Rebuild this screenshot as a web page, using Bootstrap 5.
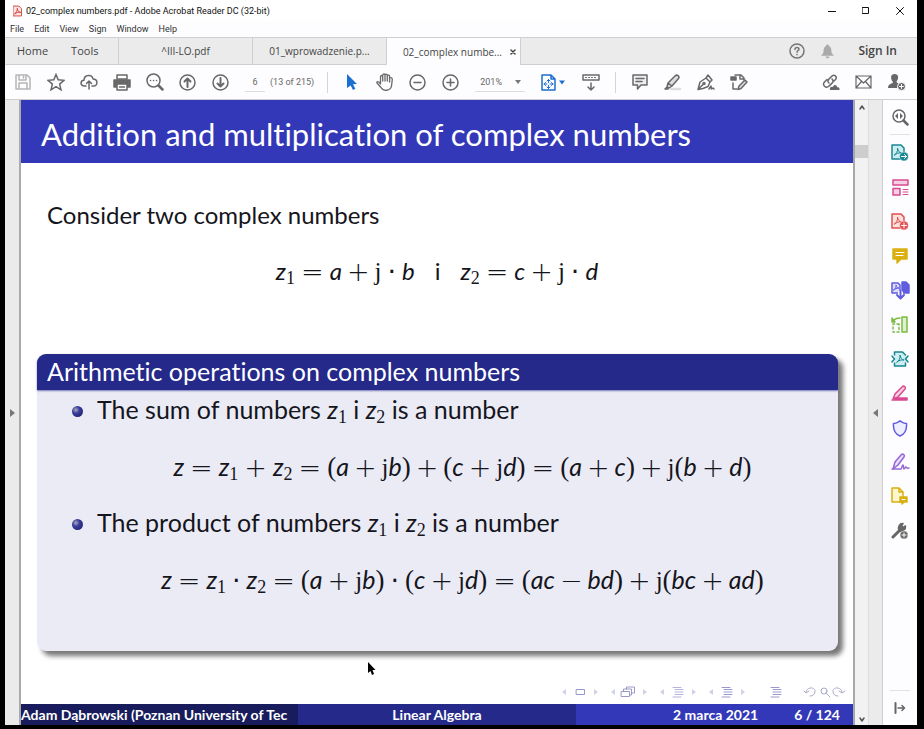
<!DOCTYPE html>
<html lang="en">
<head>
<meta charset="utf-8">
<meta name="viewport" content="width=device-width, initial-scale=1">
<title>02_complex numbers.pdf - Adobe Acrobat Reader DC (32-bit)</title>
<link href="https://cdn.jsdelivr.net/npm/bootstrap@5.3.0/dist/css/bootstrap.min.css" rel="stylesheet">
<style>
:root{--line:#cfcfcf;--blue:#3338b8;--navy:#24298a;--deep:#181c5c}
body{background:#000;font-family:"Open Sans","Noto Sans",sans-serif;font-size:9px;line-height:14px;color:#333;padding:0 7px 4px 5px}
button,input,select{font:inherit;color:inherit;border:0;background:none;padding:0}
a{color:inherit;text-decoration:none}
svg{display:block;fill:none;stroke:currentColor;stroke-width:1.5;stroke-linejoin:round;stroke-linecap:round}
svg.thin{stroke-width:1}
svg.solid{stroke:none}
.app{background:#fdfcfe}
.titlebar{height:21px;background:#fff;color:#111;font-family:Roboto,"Open Sans",sans-serif}
.winbtn{width:34px;height:20px;display:grid;place-items:center}
.menus{height:16px;padding-left:5px;gap:10px;font-family:Roboto,"Open Sans",sans-serif}
.tabs{height:28px;background:#ebebeb;border-top:1px solid var(--line);border-bottom:1px solid var(--line);font-size:11px;color:#444}
.fixedtabs{width:113px;padding-left:12px;gap:23px}
.doc{width:134px;border-left:1px solid var(--line);font-size:10px}
.doc.open{background:#fdfcfe;margin-bottom:-1px;border-right:1px solid var(--line);width:135px}
.signin{font-size:12px;font-weight:600}
.tools{height:35px;border-bottom:1px solid var(--line);color:#686868;padding-left:1px;font-family:Roboto,"Open Sans",sans-serif}
.tool{width:33px;height:32px;display:grid;place-items:center;flex:none}
.rule{width:1px;height:21px;background:#d5d5d5;margin:0 7px 0 13px}
.rule.near{margin-left:8px}
.pageno{width:20px;height:20px;border-bottom:1px solid #ddd;text-align:center;margin:0 5px 0 8px}
.zoomsel{width:50px;height:20px;border-bottom:1px solid #ddd;appearance:none;padding-left:5px}
.fit{margin-left:12px}
.rail{width:16px;background:#ebebeb;border-right:2px solid #aaa;flex:none}
.arrow{color:#777}
.sheet{background:#fff;border-right:2px solid #a8a8a8;font-family:Lato,"Open Sans",sans-serif;font-variant-ligatures:none;font-size:24px;line-height:30px;color:#15151c;min-width:0}
.sheet h1{background:var(--blue);color:#fff;font-size:31px;line-height:36px;font-weight:400;padding:16px 20px 11px;margin:0}
.intro{padding:37px 26px 26px;margin:0}
.eq{text-align:center;margin:0;white-space:nowrap}
.eq b{font:200 27px/0 "DejaVu Sans",sans-serif;padding:0 6px;vertical-align:-1px}
.eq b.tight{padding:0 5px}
.eq b.dot{font-weight:400;padding:0 6px}
.eq u{text-decoration:none;font:27px/0 "Liberation Serif",serif}
.eq .j{font-size:25px}
.sheet sub{font:18px/0 "Liberation Serif",serif;bottom:-4px}
.block{margin:68px 15px 0 16px;border-radius:9px;background:#ebebf6;box-shadow:5px 5px 5px #777}
.block h2{background:var(--navy);color:#fff;font-size:25px;line-height:34px;font-weight:400;padding:0 10px 2px;margin:0;border-radius:9px 9px 0 0;box-shadow:0 1px 2px #7779b8}
.block ul{list-style:none;margin:0;padding:4px 10px 57px 60px;font-size:25px}
.block li{position:relative}
.block li::before{content:"";position:absolute;left:-25px;top:12px;width:11px;height:11px;border-radius:50%;background:radial-gradient(circle at 35% 35%,#aab 0,#3a3e9c 35%,#15185c 100%)}
.block li .eq{margin:27px 0 26px}
.block li:last-child .eq{margin-bottom:0}
.beam{padding:0 6px 5px 0}
.foot{font-size:14px;line-height:21px;color:#fff;font-weight:700;white-space:nowrap}
.foot>div{flex:1 1 0;min-width:0}
.author{background:var(--deep)}.subject{background:var(--navy)}.when{background:var(--blue)}
.when span{margin-left:36px}
.when span:last-child{margin-right:13px}
.scroll{width:13px;background:#f2f2f2;flex:none;color:#555}
.thumb{height:13px;background:#cdcdcd;margin-top:31px}
.gutter{width:15px;background:#ebebeb;border-left:1px solid #ddd;border-right:1px solid var(--line);flex:none}
.side{width:34px;flex:none;color:#666}
.side button{width:34px;height:34px;display:grid;place-items:center}
.side .grp{padding-top:1px}
.side hr{width:20px;margin:0 auto;border-color:#999}
.teal{color:#168792}.pink{color:#d84a91}.red{color:#e0504f}.gold{color:#d9b010}.indigo{color:#605ce0}.green{color:#7cbb45}.violet{color:#9568d8}
.faint{color:#b5b5b5}.grey{color:#777}.azure{color:#1b6fd0}.pdfred{color:#d33a35}
.pointer{position:absolute;left:367px;top:661px}
</style>
<script src="https://cdn.jsdelivr.net/npm/bootstrap@5.3.0/dist/js/bootstrap.bundle.min.js"></script>
</head>
<body class="vh-100 overflow-hidden">
<div class="app h-100 d-flex flex-column">
<header>
<div class="titlebar d-flex align-items-center">
<svg class="thin pdfred ms-2 me-1" width="9" height="12" viewBox="0 0 10 12"><path fill="#fbe5e3" d="M.5.5h6l3 3v8h-9z"/><path d="M2 9c2-1 3-4 2.700-6C5 6 7 7.500 8.500 7.500 6 7 4 8 2 9z"/></svg>
<span>02_complex numbers.pdf - Adobe Acrobat Reader DC (32-bit)</span>
<div class="ms-auto d-flex">
<button class="winbtn" aria-label="Minimize"><svg class="thin" width="8" height="8"><path d="M.5 4.500h7"/></svg></button>
<button class="winbtn" aria-label="Maximize"><svg class="thin" width="8" height="8"><path d="M.5.5h6v6h-6z"/></svg></button>
<button class="winbtn" aria-label="Close"><svg class="thin" width="8" height="8"><path d="M.5.5l7 7m0-7l-7 7"/></svg></button>
</div></div>
<nav class="menus d-flex align-items-center" aria-label="Menu"><a href="#">File</a><a href="#">Edit</a><a href="#">View</a><a href="#">Sign</a><a href="#">Window</a><a href="#">Help</a></nav>
<nav class="tabs d-flex align-items-stretch" aria-label="Documents">
<div class="fixedtabs d-flex align-items-center"><a href="#">Home</a><a href="#">Tools</a></div>
<a href="#" class="doc d-flex align-items-center justify-content-center">^III-LO.pdf</a>
<a href="#" class="doc d-flex align-items-center justify-content-center">01_wprowadzenie.p...</a>
<div class="doc open d-flex align-items-center justify-content-end"><a href="#">02_complex numbe...</a><button class="ms-2 me-1" aria-label="Close tab"><svg width="6" height="6"><path d="M1 1l4 4m0-4l-4 4"/></svg></button></div>
<div class="ms-auto d-flex align-items-center gap-3 pe-3">
<button class="grey" aria-label="Help"><svg width="16" height="16"><circle cx="8" cy="8" r="7"/><path d="M6 6.500c0-3 4-2.500 4-.3C10 7.500 8 7.500 8 9.300M8 11.500v.2"/></svg></button>
<button aria-label="Notifications"><svg class="solid" width="13" height="15" viewBox="0 0 14 15"><path fill="#aaa" d="M7 0c1 0 1.500.7 1.500 1.500 3 1 2.500 5 3 7.500L14 12H0l2.500-3c.5-2.500 0-6.500 3-7.500C5.500.7 6 0 7 0zM5 13h4c0 2.500-4 2.500-4 0z"/></svg></button>
<a href="#" class="signin ms-2 me-1">Sign In</a></div>
</nav>
<div class="tools d-flex align-items-center">
<button class="tool faint" aria-label="Save"><svg width="16" height="16"><path d="M1 1h11l3 3v11H1zM4 1v5h7V1M4 15V9h8v6M8.500 2.500v1.500"/></svg></button>
<button class="tool" aria-label="Star"><svg width="18" height="18" viewBox="0 0 18 18"><path stroke-linejoin="miter" d="M9 1.500l2.200 5.300 5.800.5-4.400 3.800L14 16.800 9 13.700 4 16.800l1.400-5.700L1 7.300l5.800-.5z"/></svg></button>
<button class="tool" aria-label="Upload"><svg width="18" height="16"><path d="M6 12H4.500C0 12 0 6.500 4 6.300 4 0 12.500 0 13 5c5 0 5.300 7 .5 7H12M9 15V7M6.500 9.500L9 7l2.500 2.500"/></svg></button>
<button class="tool" aria-label="Print"><svg width="18" height="17"><path fill="currentColor" d="M1 6h16v7H1z"/><path fill="#fff" d="M4 1h10v4H4zM4 10h10v6H4z"/><path d="M6.500 13h5"/></svg></button>
<button class="tool" aria-label="Search"><svg width="18" height="18"><circle cx="7.500" cy="7.500" r="6.500"/><path d="M12.500 12.500l4 4" stroke-width="2.500"/><path d="M4.500 7.500h.1M7.500 7.500h.1M10.500 7.500h.1"/></svg></button>
<button class="tool" aria-label="Previous page"><svg width="17" height="17"><circle cx="8.500" cy="8.500" r="7.500"/><path d="M8.500 13V4.500M5.500 7.500l3-3 3 3" stroke-width="2"/></svg></button>
<button class="tool" aria-label="Next page"><svg width="17" height="17"><circle cx="8.500" cy="8.500" r="7.500"/><path d="M8.500 4v8.500M5.500 9.500l3 3 3-3" stroke-width="2"/></svg></button>
<input class="pageno" value="6" aria-label="Page number"><span>(13 of 215)</span>
<span class="rule"></span>
<button class="tool azure" aria-label="Select"><svg class="solid" width="10" height="16"><path fill="currentColor" d="M0 0l10 10-4 .3 2.300 4.500-2.300 1.200-2.300-4.600L0 14z"/></svg></button>
<button class="tool" aria-label="Hand"><svg width="18" height="18" viewBox="0 0 18 18"><path stroke-width="1.300" d="M4.500 11V4c0-2 2.200-2 2.200 0v4V2.500c0-2 2.300-2 2.300 0V8 2.500c0-1.800 2.300-1.800 2.300 0V8 3.500c0-1.800 2.300-1.800 2.300 0V9 6c0-2 2.700-2 2.700.5L15.500 13C14.500 18.300 7 18.500 5 14.500L1 10c-.5-1.800 1.500-2 3.500 1z"/></svg></button>
<button class="tool" aria-label="Zoom out"><svg width="17" height="17"><circle cx="8.500" cy="8.500" r="7.500"/><path d="M5 8.500h7"/></svg></button>
<button class="tool" aria-label="Zoom in"><svg width="17" height="17"><circle cx="8.500" cy="8.500" r="7.500"/><path d="M5 8.500h7M8.500 5v7"/></svg></button>
<div class="position-relative ms-2"><select class="zoomsel" aria-label="Zoom"><option>201%</option></select><svg class="solid position-absolute end-0 top-50 translate-middle-y me-1" width="6" height="4"><path fill="#777" d="M0 0h6L3 4z"/></svg></div>
<button class="tool fit azure" aria-label="Fit page"><svg width="25" height="17"><path d="M1 1h9l4 4v11H1zM10 1v4h4"/><path stroke-width="1" d="M7.500 5.500v3m0 3v3M3 10h3m3 0h3M6 7l1.500-1.500L9 7M6 13l1.500 1.500L9 13M4.500 8.500L3 10l1.500 1.500M10.500 8.500L12 10l-1.500 1.500"/><path fill="currentColor" stroke="none" d="M18 6.500h6l-3 4z"/></svg></button>
<button class="tool ms-1" aria-label="Scroll mode"><svg width="18" height="17"><path d="M1 1h16v5H1zM9 9v7M6 13l3 3 3-3"/><path stroke-dasharray="1 2" stroke-width="1" d="M3.500 3.500h12"/></svg></button>
<span class="rule near"></span>
<button class="tool" aria-label="Comment"><svg width="16" height="16"><path fill="#eee" d="M1 1h14v10H9l-3.500 4v-4H1zM4 4.500h8M4 7.500h6"/></svg></button>
<button class="tool" aria-label="Highlight"><svg width="17" height="17"><path stroke="#ddd" stroke-width="2.500" d="M7 15h9"/><path fill="#ddd" d="M4 9l7-7c2-2 5 0 3.500 2.500L8 12zM4 9l-1 4 2 1 3-2M3 13l-2 2h3"/></svg></button>
<button class="tool" aria-label="Sign"><svg width="18" height="17"><path d="M1 15.500L3 8l6-4 4 4-2 4.500-5 2zM1 15.500l5-5M9 4l2-3 4 5-2 2M12 15l2-3 .5 3 1.500-1 1 1"/><circle cx="7" cy="9.500" r="1"/></svg></button>
<button class="tool" aria-label="Stamp"><svg width="18" height="17"><path d="M5 1h6l3 3v2M10 1v4h3M3 9v6h4"/><path fill="currentColor" d="M1 3h5v3H1z"/><path fill="#ddd" d="M9 12l6-6 2 2-6 6.500-3 1z"/></svg></button>
<div class="ms-auto d-flex pe-1">
<button class="tool" aria-label="Share link"><svg width="18" height="17"><path d="M7 9c-3-2 1-5 2.500-6.500C12-.5 16 3 13.500 5.500L12 7M10 5c3 3-1 5-3 7-3 3-7.500-1-4.500-4L5 5.500"/><path fill="currentColor" stroke="none" d="M8 16c-1-3 2-4 3-3 1-3 4-2 4 0 3 0 3 3 2 3z"/></svg></button>
<button class="tool" aria-label="Email"><svg width="17" height="14"><path stroke-width="1.200" d="M1 1h15v12H1zM1 1l7.500 7L16 1M1 13l5-6m5 0l5 6"/></svg></button>
<button class="tool" aria-label="Add person"><svg width="18" height="17"><path fill="currentColor" stroke="none" d="M6.500 0c5 0 4 5.500 2 7.500 0 1.500 2 1.500 3 2.500L9 14H0c0-5 5-4 5-6C2.500 5.500 2 0 6.500 0z"/><circle cx="13.500" cy="12.500" r="4" fill="currentColor" stroke="#fff" stroke-width="1"/><path stroke="#fff" stroke-width="1" d="M11.500 12.500h4m-2-2v4"/></svg></button>
</div></div>
</header>

<main class="flex-grow-1 d-flex align-items-stretch">
<div class="rail d-flex align-items-center justify-content-center"><svg class="solid arrow" width="5" height="8"><path fill="currentColor" d="M0 0v8l5-4z"/></svg></div>
<article class="sheet flex-grow-1 d-flex flex-column">
<h1>Addition and multiplication of complex numbers</h1>
<p class="intro">Consider two complex numbers</p>
<p class="eq"><i>z</i><sub>1</sub><b>=</b><i>a</i><b class="tight">+</b><u class="j">j</u><b class="dot">·</b><i>b</i><span class="mx-3 px-1">i</span><i>z</i><sub>2</sub><b>=</b><i>c</i><b class="tight">+</b><u class="j">j</u><b class="dot">·</b><i>d</i></p>
<section class="block">
<h2>Arithmetic operations on complex numbers</h2>
<ul>
<li>The sum of numbers <i>z</i><sub>1</sub> i <i>z</i><sub>2</sub> is a number
<p class="eq"><i>z</i><b>=</b><i>z</i><sub>1</sub><b>+</b><i>z</i><sub>2</sub><b>=</b><u>(</u><i>a</i><b class="tight">+</b><u class="j">j</u><i>b</i><u>)</u><b class="tight">+</b><u>(</u><i>c</i><b class="tight">+</b><u class="j">j</u><i>d</i><u>)</u><b>=</b><u>(</u><i>a</i><b class="tight">+</b><i>c</i><u>)</u><b class="tight">+</b><u class="j">j</u><u>(</u><i>b</i><b class="tight">+</b><i>d</i><u>)</u></p></li>
<li>The product of numbers <i>z</i><sub>1</sub> i <i>z</i><sub>2</sub> is a number
<p class="eq"><i>z</i><b>=</b><i>z</i><sub>1</sub><b class="dot">·</b><i>z</i><sub>2</sub><b>=</b><u>(</u><i>a</i><b class="tight">+</b><u class="j">j</u><i>b</i><u>)</u><b class="dot">·</b><u>(</u><i>c</i><b class="tight">+</b><u class="j">j</u><i>d</i><u>)</u><b>=</b><u>(</u><i>ac</i><b class="tight">−</b><i>bd</i><u>)</u><b class="tight">+</b><u class="j">j</u><u>(</u><i>bc</i><b class="tight">+</b><i>ad</i><u>)</u></p></li>
</ul>
</section>
<div class="beam mt-auto d-flex justify-content-end">
<svg class="thin" width="286" height="15"><g fill="#d0d0ea" stroke="none"><path d="M5 5v6L1 8zM33 5v6l4-3zM54 5v6l-4-3zM82 5v6l4-3zM103 5v6l-4-3zM131 5v6l4-3zM152 5v6l-4-3zM180 5v6l4-3z"/></g><path stroke="#9999c8" d="M15.500 5.500h8v5h-8zM60.500 7.500h8v5h-8zM62.500 7v-2h8v6h-2M65.500 5v-2h8v6h-3"/><path stroke="#b4b4dc" d="M112 3.500h8M114 5.500h8M114 8h8M114 10.500h8M112 13h8"/><path stroke="#9999d0" d="M161 3.500h8M163 5.500h8M163 8h8M163 10.500h8M161 13h8M210 3.500h8M212 5.500h8M212 8h8M212 10.500h8M210 13h8"/><path stroke="#aaaacc" d="M243 7l2 2 3-2M245 8c1-6 10-5 9 0-.5 3-2.500 4-5 4M265 9l4 4M281 8c-1-6-10-5-9 0 .5 3 2.500 4 5 4M278 7l3 2 3-2"/><circle cx="263" cy="7" r="3" stroke="#aaaacc"/></svg></div>
<footer class="foot d-flex"><div class="author">Adam Dąbrowski (Poznan University of Tec</div><div class="subject text-center">Linear Algebra</div><div class="when d-flex justify-content-end"><span>2 marca 2021</span><span>6 / 124</span></div></footer>
</article>
<div class="scroll d-flex flex-column"><svg class="mx-auto mt-1" width="6" height="10"><path d="M1 5l2-3 2 3"/></svg><div class="thumb"></div><svg class="mx-auto mt-auto" width="6" height="10"><path d="M1 3l2 3 2-3"/></svg></div>
<div class="gutter d-flex align-items-center justify-content-center"><svg class="solid arrow" width="5" height="8"><path fill="currentColor" d="M5 0v8L0 4z"/></svg></div>
<aside class="side d-flex flex-column" aria-label="Tools">
<div><button aria-label="Find tools"><svg width="17" height="17"><circle cx="7" cy="7" r="6"/><path d="M11.500 11.500l4 4" stroke-width="2.500"/><path stroke="none" fill="currentColor" d="M6 4v6L3 7zM8 4v6l3-3z"/></svg></button></div><hr>
<div class="grp">
<button class="teal" aria-label="Export PDF"><svg width="18" height="18"><path fill="#cdeef0" d="M1 1h9l3 3v11H1z"/><path stroke-width="1" d="M3.500 11c2-1 3.500-4 3-7 .5 3 2 5 4 5-3-.5-5 .5-7 2z"/><circle cx="13" cy="12.500" r="4.500" fill="currentColor" stroke="#fff" stroke-width=".5"/><path stroke="#fff" stroke-width="1" d="M10.500 12.500h5m-2-2l2 2-2 2"/></svg></button>
<button class="pink" aria-label="Organize pages"><svg width="17" height="17"><path fill="#f7cfe2" d="M1 1h15v5H1zM1 9.500h7v6.500H1z"/><path stroke-width="1" d="M11 10.500h5M11 13h5M11 15.500h5"/></svg></button></div>
<div class="grp"><button class="red" aria-label="Create PDF"><svg width="18" height="18"><path fill="#fbe0dd" d="M1 1h9l3 3v11H1z"/><path stroke-width="1" d="M3.500 11c2-1 3.500-4 3-7 .5 3 2 5 4 5-3-.5-5 .5-7 2z"/><circle cx="13" cy="12.500" r="4.500" fill="currentColor" stroke="#fff" stroke-width=".5"/><path stroke="#fff" stroke-width="1" d="M10.500 12.500h5m-2.500-2.500v5"/></svg></button>
<button class="gold" aria-label="Comment tool"><svg width="16" height="16"><path fill="currentColor" d="M1 1h14v10H9l-4 4v-4H1z"/><path stroke="#fff" stroke-width="1" d="M4 4.500h8M4 7.500h7"/></svg></button>
<button class="indigo" aria-label="Combine files"><svg width="19" height="19"><path fill="#dddcfa" d="M1 2h6l2 2v8H1z"/><path fill="currentColor" d="M11 1h4l3 3v8h-7z"/><path stroke-width="1" d="M2.500 9c2-1 3-3 2.500-5 0 2 1 3 3 3-2 0-4 1-5.500 2z"/><path stroke="#fff" stroke-width="5" d="M9.500 12v4"/><path stroke-width="2" d="M9.500 10v7M6 14l3.500 3.500L13 14"/></svg></button></div>
<div class="grp"><button class="green" aria-label="Compare"><svg width="18" height="18"><path fill="#dff0cd" d="M11 1h5v15h-5z"/><path stroke-dasharray="2 2.500" d="M8 8H2v8h6z"/><path fill="currentColor" d="M1 2l3 4H1z"/><path d="M3 4c2-2 4-2 6-2"/></svg></button>
<button class="teal" aria-label="Optimize"><svg width="18" height="18"><path fill="#cdeef0" d="M4 2h8l3 3v11H4z" stroke="none"/><path d="M3.500 5V2h8L14.500 5M14.500 13v3h-11v-3M1 6l2.500 3L1 12M17 6l-2.500 3 2.500 3"/><path stroke-width="1" d="M6 12c2-1 3.500-4 3-7 .5 3 2 5 4 5-3-.5-5 .5-7 2z"/></svg></button>
<button class="pink" aria-label="Redact"><svg width="18" height="17"><path fill="#f7cfe2" d="M4 9l7-7c2-2 4 0 3 2L7 12l-5 2z"/><path fill="currentColor" d="M1 15h2l3-2h10v2z"/></svg></button></div>
<div class="grp"><button class="indigo" aria-label="Protect"><svg width="16" height="17"><path fill="#eeeefe" d="M1.500 3.500C5 3.500 6 2 8 1c2 1 3 2.500 6.500 2.500C15 10 13 14 8 16 3 14 1 10 1.500 3.500z"/></svg></button>
<button class="violet" aria-label="Fill and sign"><svg width="19" height="18"><path fill="#eadcfb" d="M4 9l6-7c2-2 4 0 3 2L7 12l-5 4z"/><path d="M1 16h9c1-1 1-4 2-4s0 4 1 4 1-2 2-2 0 2 3 1"/></svg></button>
<button class="gold" aria-label="Send for comments"><svg width="18" height="18"><path fill="#fdf6cf" d="M1 1h7l4 4v10H1zM8 1v4h4"/><path fill="currentColor" d="M9 10h7v5h-3l-2 2v-2H9z"/><path stroke="#fff" stroke-width="1" d="M11 12.500h3"/></svg></button></div>
<div class="grp"><button aria-label="More tools"><svg width="18" height="18"><path stroke-width="3" d="M2 15l7-7"/><path fill="currentColor" d="M8 9C6 5 9 1 12 1.500L10.500 4 12 5.500 14.500 4C15 7 12 10 8 9z"/><circle cx="13" cy="13" r="4" fill="#666" stroke="#fff" stroke-width=".5"/><path stroke="#fff" stroke-width="1" d="M11 13h4m-2-2v4"/></svg></button></div>
<hr class="mt-auto">
<button aria-label="Collapse pane"><svg width="12" height="12"><path stroke-width="2" d="M1.500 1v10"/><path d="M4 6h6M8 3.500L10.500 6 8 8.500"/></svg></button>
</aside>
</main>
</div>
<svg class="solid pointer" width="10" height="16"><path fill="#000" d="M1 1l7.500 8H5.500L7 13l-2 1-1.500-4L1 12z"/></svg>
</body>
</html>
